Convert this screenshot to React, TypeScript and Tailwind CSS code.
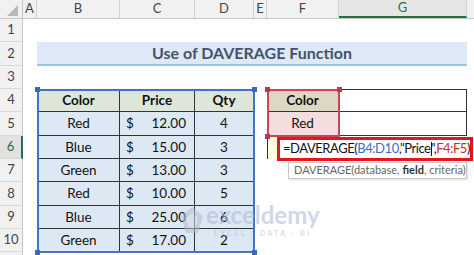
import React from "react";

const font = "font-['Lato','Liberation_Sans',sans-serif]";

function RowHead({ n, active = false, h }: { n?: number; active?: boolean; h: string }) {
  return (
    <div
      className={`${h} w-[23px] shrink-0 flex items-center justify-center text-[13px] border-b border-[#d9d9d9] ${
        active
          ? "bg-[#e1e1e1] text-[#217346] border-r-2 border-r-[#217346]"
          : "bg-[#f1f1f1] text-[#444] border-r border-r-[#c6c6c6]"
      }`}
    >
      {n}
    </div>
  );
}

const dataRows: [string, string, string][] = [
  ["Red", "12.00", "4"],
  ["Blue", "15.00", "3"],
  ["Green", "13.00", "3"],
  ["Red", "10.00", "5"],
  ["Blue", "25.00", "6"],
  ["Green", "17.00", "2"],
];
const dataHeights = ["h-[24px]", "h-[23px]", "h-[23px]", "h-[24px]", "h-[23px]", "h-[23px]"];

export default function App() {
  return (
    <div className={`relative w-[474px] h-[255px] overflow-hidden bg-white text-[#111] ${font}`}>
      {/* column headers */}
      <div className="flex h-[19px] border-b border-[#c6c6c6] bg-[#f1f1f1] text-[13px] text-[#444]">
        <div className="w-[23px] shrink-0 relative border-r border-[#c6c6c6]">
          <svg className="absolute left-[7px] top-[5px]" width="12" height="11" viewBox="0 0 12 11">
            <polygon points="11,0 11,11 0,11" fill="#b9b9b9" />
          </svg>
        </div>
        <div className="w-[14px] shrink-0 flex items-center justify-center border-r border-[#d4d4d4]">A</div>
        <div className="w-[83px] shrink-0 flex items-center justify-center border-r border-[#d4d4d4]">B</div>
        <div className="w-[75px] shrink-0 flex items-center justify-center border-r border-[#d4d4d4]">C</div>
        <div className="w-[59px] shrink-0 flex items-center justify-center border-r border-[#d4d4d4]">D</div>
        <div className="w-[13px] shrink-0 flex items-center justify-center border-r border-[#d4d4d4]">E</div>
        <div className="w-[72px] shrink-0 flex items-center justify-center border-r border-[#d4d4d4]">F</div>
        <div className="w-[128px] shrink-0 flex items-center justify-center border-r border-[#d4d4d4] bg-[#e6e6e6] text-[#217346] border-b-2 border-b-[#217346]">
          G
        </div>
        <div className="flex-1" />
      </div>

      {/* row 1 */}
      <div className="flex">
        <RowHead n={1} h="h-[23px]" />
      </div>

      {/* row 2 title */}
      <div className="flex">
        <RowHead n={2} h="h-[24px]" />
        <div className="w-[14px] shrink-0" />
        <div className="w-[430px] shrink-0 h-[24px] bg-[#dde9f6] border-b-2 border-[#9dc3e6] flex items-center justify-center text-[16px] font-bold text-[#44546a]">
          Use of DAVERAGE Function
        </div>
      </div>

      {/* row 3 */}
      <div className="flex">
        <RowHead n={3} h="h-[23px]" />
      </div>

      {/* row 4 */}
      <div className="flex text-[13.5px]">
        <RowHead n={4} h="h-[23px]" />
        <div className="w-[14px] shrink-0" />
        <div className="w-[83px] shrink-0 h-[23px] bg-[#dde6d8] border-t border-l border-r border-b border-[#333] flex items-center justify-center font-bold">Color</div>
        <div className="w-[75px] shrink-0 h-[23px] bg-[#dde6d8] border-t border-r border-b border-[#333] flex items-center justify-center font-bold">Price</div>
        <div className="w-[59px] shrink-0 h-[23px] bg-[#dde6d8] border-t border-r border-b border-[#333] flex items-center justify-center font-bold">Qty</div>
        <div className="w-[13px] shrink-0" />
        <div className="w-[72px] shrink-0 h-[23px] bg-[#ddd8c3] border-t border-r border-b border-[#333] flex items-center justify-center font-bold">Color</div>
        <div className="w-[128px] shrink-0 h-[23px] border-t border-r border-b border-[#333]" />
      </div>

      {/* rows 5-10 */}
      {dataRows.map((r, i) => {
        const n = i + 5;
        const h = dataHeights[i];
        return (
          <div key={n} className="flex text-[13.5px]">
            <RowHead n={n} h={h} active={n === 6} />
            <div className="w-[14px] shrink-0" />
            <div className={`w-[83px] shrink-0 ${h} bg-[#dde8f5] border-l border-r border-b border-[#333] flex items-center justify-center`}>
              {r[0]}
            </div>
            <div className={`w-[75px] shrink-0 ${h} bg-[#dde8f5] border-r border-b border-[#333] flex items-center justify-between pl-[6px] pr-[8px]`}>
              <span>$</span>
              <span>{r[1]}</span>
            </div>
            <div className={`w-[59px] shrink-0 ${h} bg-[#dde8f5] border-r border-b border-[#333] flex items-center justify-center`}>
              {r[2]}
            </div>
            <div className="w-[13px] shrink-0" />
            {n === 5 && (
              <>
                <div className="w-[72px] shrink-0 h-[24px] bg-[#f3dede] border-r border-b border-[#333] flex items-center justify-center">Red</div>
                <div className="w-[128px] shrink-0 h-[24px] border-r border-b border-[#333]" />
              </>
            )}
            {n === 6 && <div className="w-[11px] shrink-0 h-[23px] bg-[#fffde0] border-l border-[#333]" />}
          </div>
        );
      })}

      {/* row 11 partial */}
      <div className="flex">
        <RowHead h="h-[23px]" />
      </div>

      {/* blue range highlight */}
      <div className="absolute left-[37px] top-[89px] w-[218px] h-[164px] border-2 border-[#4472c4]" />
      <div className="absolute left-[35px] top-[87px] w-[5px] h-[5px] bg-[#3b66c0]" />
      <div className="absolute left-[252px] top-[87px] w-[5px] h-[5px] bg-[#3b66c0]" />
      <div className="absolute left-[35px] top-[250px] w-[5px] h-[5px] bg-[#3b66c0]" />
      <div className="absolute left-[252px] top-[250px] w-[5px] h-[5px] bg-[#3b66c0]" />

      {/* red range highlight */}
      <div className="absolute left-[267px] top-[89px] w-[73px] h-[48px] border-2 border-[#c8455a]" />
      <div className="absolute left-[265px] top-[87px] w-[5px] h-[5px] bg-[#c0364e]" />
      <div className="absolute left-[337px] top-[87px] w-[5px] h-[5px] bg-[#c0364e]" />
      <div className="absolute left-[265px] top-[134px] w-[5px] h-[5px] bg-[#c0364e]" />

      {/* in-cell editor */}
      <div className="absolute left-[277px] top-[137px] w-[196px] h-[24px] bg-white border-[3px] border-[#e6141e] flex items-center pl-[3px] whitespace-nowrap overflow-hidden text-[13px] tracking-[-0.45px] text-[#111]">
        <span>=DAVERAGE(</span>
        <span className="text-[#3a6fc4]">B4:D10</span>
        <span>,"Price</span>
        <span className="inline-block w-px h-[14px] bg-[#111]" />
        <span>",</span>
        <span className="text-[#c03030]">F4:F5</span>
        <span>)</span>
      </div>

      {/* tooltip */}
      <div className="absolute left-[288px] top-[162px] w-[179px] h-[17px] bg-white border border-[#c8c8c8] shadow-[1px_1px_2px_rgba(0,0,0,0.12)] flex items-center pl-[5px] whitespace-nowrap text-[11px] text-[#666]">
        <span>
          DAVERAGE(database, <b className="font-bold text-[#333]">field</b>, criteria)
        </span>
      </div>

      {/* watermark */}
      <div className="absolute left-[180px] top-[204px] flex items-start opacity-55 pointer-events-none">
        <svg width="24" height="28" viewBox="0 0 24 28" className="mt-[2px]">
          <polygon points="12,1 23,10 18,27 6,27 1,10" fill="#b4bccb" />
          <polygon points="12,7 18,12 15,22 9,22 6,12" fill="#d2d8e3" />
        </svg>
        <div className="flex flex-col items-center ml-[2px] -mt-[3px]">
          <span className="text-[24px] leading-[28px] font-bold text-[#a9b7d6]">exceldemy</span>
          <span className="text-[7px] leading-[8px] text-[#b0b0b0] tracking-[2.5px]">EXCEL · DATA · BI</span>
        </div>
      </div>
    </div>
  );
}
